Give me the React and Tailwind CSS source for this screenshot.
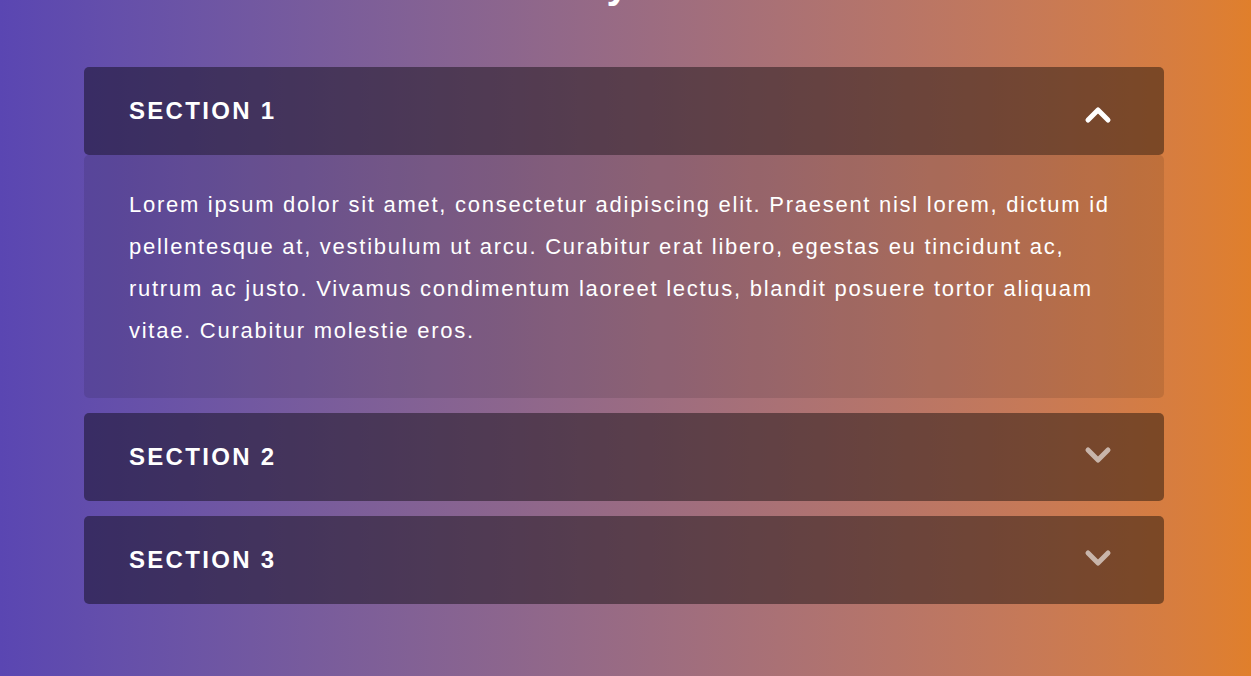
import React, { useState } from "react";

const sections = [
  {
    title: "Section 1",
    body:
      "Lorem ipsum dolor sit amet, consectetur adipiscing elit. Praesent nisl lorem, dictum id pellentesque at, vestibulum ut arcu. Curabitur erat libero, egestas eu tincidunt ac, rutrum ac justo. Vivamus condimentum laoreet lectus, blandit posuere tortor aliquam vitae. Curabitur molestie eros.",
  },
  {
    title: "Section 2",
    body:
      "Lorem ipsum dolor sit amet, consectetur adipiscing elit. Praesent nisl lorem, dictum id pellentesque at, vestibulum ut arcu. Curabitur erat libero, egestas eu tincidunt ac, rutrum ac justo.",
  },
  {
    title: "Section 3",
    body:
      "Lorem ipsum dolor sit amet, consectetur adipiscing elit. Praesent nisl lorem, dictum id pellentesque at, vestibulum ut arcu.",
  },
];

function Chevron({ up }) {
  return (
    <svg width="30" height="20" viewBox="0 0 30 20" className={up ? "text-white" : "text-white/60"}>
      <polyline
        points={up ? "5,15 15,5 25,15" : "5,5 15,15 25,5"}
        fill="none"
        stroke="currentColor"
        strokeWidth="5"
        strokeLinecap="round"
        strokeLinejoin="round"
      />
    </svg>
  );
}

export default function App() {
  const [open, setOpen] = useState(0);
  return (
    <div
      className="min-h-screen overflow-hidden bg-gradient-to-r from-[#5a46b2] to-[#e07f2b] pb-10"
      style={{ fontFamily: '"Liberation Sans", Arial, sans-serif' }}
    >
      <h1 className="-mt-[40px] mb-[59px] text-center text-[40px] font-bold leading-[48px] text-white">
        Layout
      </h1>
      <div className="ml-[84px] w-[1080px]">
        {sections.map((s, i) => (
          <div key={s.title} className="mb-[15px]">
            <button
              onClick={() => setOpen(open === i ? -1 : i)}
              className="flex h-[88px] w-full items-center justify-between rounded-[5px] bg-black/[0.42] pl-[45px] pr-[51px] text-left"
            >
              <span className="text-[24px] font-bold uppercase tracking-[2.3px] text-white">
                {s.title}
              </span>
              <span className={open === i ? "mt-[7px]" : "-mt-[4px]"}>
                <Chevron up={open === i} />
              </span>
            </button>
            {open === i && (
              <div className="rounded-[5px] bg-black/10 pb-[46px] pl-[45px] pr-[40px] pt-[29px]">
                <p className="text-[22px] leading-[42px] tracking-[1.73px] text-white">{s.body}</p>
              </div>
            )}
          </div>
        ))}
      </div>
    </div>
  );
}
